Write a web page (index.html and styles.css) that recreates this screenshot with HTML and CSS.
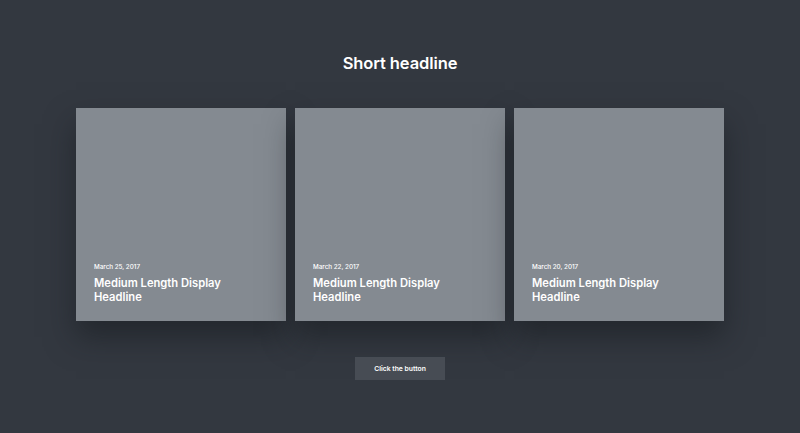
FILE: index.html
```html
<!DOCTYPE html>
<html>
<head>
<meta charset="utf-8">
<link rel="stylesheet" href="styles.css">
</head>
<body>
<main class="page">
  <h1 class="title">Short headline</h1>
  <div class="cards">
    <article class="card">
      <div class="date">March 25, 2017</div>
      <h2 class="card-title">Medium Length Display Headline</h2>
    </article>
    <article class="card">
      <div class="date">March 22, 2017</div>
      <h2 class="card-title">Medium Length Display Headline</h2>
    </article>
    <article class="card">
      <div class="date">March 20, 2017</div>
      <h2 class="card-title">Medium Length Display Headline</h2>
    </article>
  </div>
  <button class="btn">Click the button</button>
</main>
</body>
</html>
```
FILE: styles.css
```css
html, body {
  margin: 0;
  padding: 0;
  background: #333840;
  font-family: Inter, "Noto Sans", sans-serif;
  color: #fff;
}
.page {
  display: flex;
  flex-direction: column;
  align-items: center;
  padding-top: 51px;
  height: 433px;
  box-sizing: border-box;
}
.title {
  margin: 0;
  font-size: 16.5px;
  font-weight: 600;
  line-height: 24px;
  letter-spacing: -0.1px;
}
.cards {
  display: flex;
  gap: 9px;
  margin-top: 33px;
}
.card {
  width: 210px;
  height: 213px;
  box-sizing: border-box;
  background: #848a91;
  padding: 0 18px 17px;
  display: flex;
  flex-direction: column;
  justify-content: flex-end;
  box-shadow: 0 16px 28px rgba(20, 23, 28, 0.5);
}
.date {
  font-size: 6.3px;
  line-height: 9px;
  font-weight: 500;
  margin-bottom: 4px;
}
.card-title {
  margin: 0;
  font-size: 11.2px;
  line-height: 14px;
  font-weight: 600;
}
.btn {
  margin-top: 36px;
  width: 90px;
  height: 23px;
  border: none;
  background: #474c54;
  color: #fff;
  font-family: Inter, "Noto Sans", sans-serif;
  font-size: 6.8px;
  font-weight: 600;
  padding: 0;
}
```
